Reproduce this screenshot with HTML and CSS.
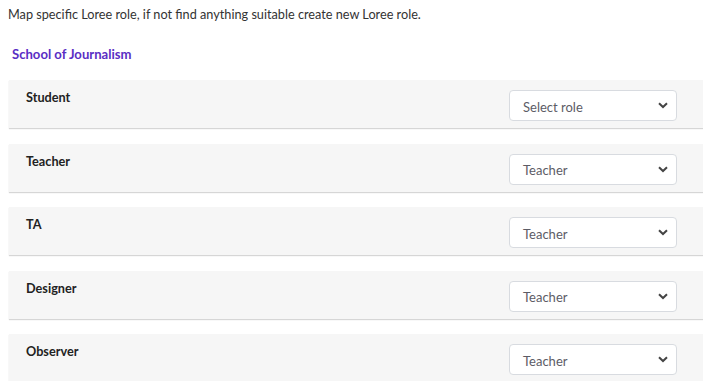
FILE: index.html
```html
<!DOCTYPE html>
<html lang="en">
<head>
    <meta charset="UTF-8">
    <meta name="viewport" content="width=device-width, initial-scale=1.0">
    <title>Role Mapping</title>
    <link rel="stylesheet" href="styles.css">
</head>
<body>

    <p class="intro">Map specific Loree role, if not find anything suitable create new Loree role.</p>

    <h2 class="school">School of Journalism</h2>

    <div class="role-list">
        <div class="role-row">
            <span class="role-name">Student</span>
            <div class="select-wrap">
                <span class="select-value">Select role</span>
                <svg class="chevron" width="10" height="7" viewBox="0 0 10 7"><path d="M1 1.2 L5 5 L9 1.2" fill="none" stroke="#444" stroke-width="2"/></svg>
            </div>
        </div>
        <div class="role-row">
            <span class="role-name">Teacher</span>
            <div class="select-wrap">
                <span class="select-value">Teacher</span>
                <svg class="chevron" width="10" height="7" viewBox="0 0 10 7"><path d="M1 1.2 L5 5 L9 1.2" fill="none" stroke="#444" stroke-width="2"/></svg>
            </div>
        </div>
        <div class="role-row">
            <span class="role-name">TA</span>
            <div class="select-wrap">
                <span class="select-value">Teacher</span>
                <svg class="chevron" width="10" height="7" viewBox="0 0 10 7"><path d="M1 1.2 L5 5 L9 1.2" fill="none" stroke="#444" stroke-width="2"/></svg>
            </div>
        </div>
        <div class="role-row">
            <span class="role-name">Designer</span>
            <div class="select-wrap">
                <span class="select-value">Teacher</span>
                <svg class="chevron" width="10" height="7" viewBox="0 0 10 7"><path d="M1 1.2 L5 5 L9 1.2" fill="none" stroke="#444" stroke-width="2"/></svg>
            </div>
        </div>
        <div class="role-row">
            <span class="role-name">Observer</span>
            <div class="select-wrap">
                <span class="select-value">Teacher</span>
                <svg class="chevron" width="10" height="7" viewBox="0 0 10 7"><path d="M1 1.2 L5 5 L9 1.2" fill="none" stroke="#444" stroke-width="2"/></svg>
            </div>
        </div>
    </div>

</body>
</html>
```

FILE: styles.css
```css
body {
    font-family: Lato, "Open Sans", sans-serif;
    background-color: #ffffff;
    color: #222;
    margin: 0;
    padding: 6px 0 0 8px;
    overflow: hidden;
}

.intro {
    font-size: 12.7px;
    line-height: 16px;
    margin: 0;
    color: #333;
}

.school {
    font-size: 13.1px;
    font-weight: bold;
    line-height: 16px;
    color: #5a2ec4;
    margin: 24px 0 0 4px;
}

.role-list {
    margin: 18px 0 0 1px;
    display: flex;
    flex-direction: column;
    gap: 15.5px;
}

.role-row {
    background-color: #f6f6f6;
    height: 48px;
    box-sizing: border-box;
    padding: 10px 26px 0 17px;
    display: flex;
    justify-content: space-between;
    align-items: flex-start;
    box-shadow: 0px 1px 1px rgba(0, 0, 0, 0.16);
}

.role-name {
    font-size: 12.7px;
    font-weight: bold;
    color: #222;
    line-height: 16px;
    margin-top: -1px;
}

.select-wrap {
    width: 168px;
    height: 31px;
    box-sizing: border-box;
    background-color: #fff;
    border: 1px solid #d8dbe0;
    border-radius: 4px;
    display: flex;
    align-items: center;
    justify-content: space-between;
    padding: 0 8px 0 13px;
}

.select-value {
    font-size: 13px;
    color: #5c5c66;
    margin-top: 2px;
}

.chevron {
    display: block;
}
```
